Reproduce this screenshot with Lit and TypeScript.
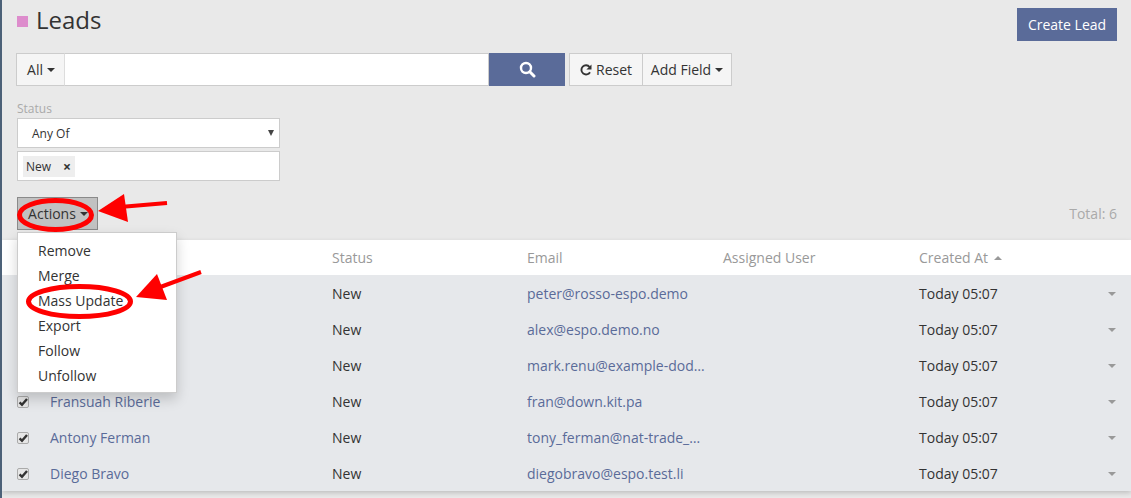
import { LitElement, html, css, svg } from "lit";
import { customElement } from "lit/decorators.js";

const rows = [
  { name: "", email: "peter@rosso-espo.demo" },
  { name: "", email: "alex@espo.demo.no" },
  { name: "", email: "mark.renu@example-dodge-mail.demo" },
  { name: "Fransuah Riberie", email: "fran@down.kit.pa" },
  { name: "Antony Ferman", email: "tony_ferman@nat-trade_group.demo" },
  { name: "Diego Bravo", email: "diegobravo@espo.test.li" },
];
const menu = ["Remove", "Merge", "Mass Update", "Export", "Follow", "Unfollow"];

const check = html`<span class="check"><svg viewBox="0 0 12 12" width="12" height="12"><path d="M2.6 6.4 L5 8.8 L10 3" fill="none" stroke="#333" stroke-width="2.4"/></svg></span>`;

@customElement("app-root")
export class AppRoot extends LitElement {
  static styles = css`
    :host { display: block; position: relative; width: 1131px; height: 498px; overflow: hidden; background: #e9e9e9; font: 14px/20px "Open Sans", sans-serif; color: #333; box-sizing: border-box; border-left: 2px solid #4c6178; }
    * { box-sizing: border-box; }
    .head { display: flex; justify-content: space-between; height: 53px; padding: 8px 14px 0 15px; }
    .title { display: flex; align-items: flex-start; font-size: 24px; line-height: 28px; gap: 8px; margin-top: -2px; }
    .sq { width: 11px; height: 11px; background: #dd8ccc; margin-top: 10px; }
    .btn-primary { width: 100px; height: 33px; background: #5a6b99; color: #fff; display: flex; align-items: center; justify-content: center; }
    .search { display: flex; height: 33px; padding-left: 14px; }
    .btn { background: #f5f5f5; border: 1px solid #ccc; display: flex; align-items: center; justify-content: center; gap: 4px; }
    .all { width: 49px; border-right: 1px solid #ddd; padding-left: 1px; }
    .q { width: 424px; background: #fff; border: 1px solid #ccc; border-left: 0; }
    .go { width: 76px; background: #5a6b99; display: flex; align-items: center; justify-content: center; }
    .reset { width: 74px; margin-left: 4px; }
    .add { width: 90px; margin-left: -1px; }
    .caret { width: 0; height: 0; border-left: 4px solid transparent; border-right: 4px solid transparent; border-top: 4px solid #333; display: inline-block; }
    .filter { padding: 15px 0 0 15px; width: 278px; }
    .label { font-size: 12px; line-height: 14px; color: #aaa; padding-top: 1px; margin-bottom: -1px; }
    .select, .tags { background: #fff; border: 1px solid #ccc; height: 30px; display: flex; align-items: center; font-size: 12px; }
    .select { margin-top: 3px; justify-content: space-between; padding: 2px 5px 0 14px; }
    .tri { width: 0; height: 0; border-left: 3.5px solid transparent; border-right: 3.5px solid transparent; border-top: 6px solid #444; margin-top: -3px; }
    .tags { margin-top: 3px; padding-left: 5px; }
    .tag { width: 52px; height: 21px; background: #eee; display: flex; justify-content: space-between; align-items: center; padding: 2px 4px 0 3px; font-size: 12px; }
    .tag b { font-size: 14px; line-height: 14px; font-weight: 700; margin-top: -1px; }
    .bar { display: flex; justify-content: space-between; align-items: center; height: 33px; margin-top: 16px; padding: 0 14px 0 15px; }
    .actions { width: 81px; height: 33px; background: #c1c1c1; border: 1px solid #8a8a8a; display: flex; align-items: center; justify-content: center; gap: 4px; padding-left: 1px; }
    .total { color: #aaa; }
    .table { margin-top: 10px; box-shadow: 0 2px 5px rgba(0,0,0,.18); }
    .row { display: grid; grid-template-columns: 33px 282px 195px 196px 196px 1fr; align-items: center; height: 36px; padding: 2px 15px 0; background: #e6e8eb; }
    .row.hd { height: 35px; padding-top: 0; background: #fff; color: #999; }
    .row .em { overflow: hidden; white-space: nowrap; text-overflow: ellipsis; width: 179px; }
    a { color: #5a6b99; text-decoration: none; }
    .date { display: flex; justify-content: space-between; align-items: center; }
    .sm { width: 0; height: 0; border-left: 4px solid transparent; border-right: 4px solid transparent; display: inline-block; }
    .up { border-bottom: 4px solid #999; }
    .dn { border-top: 4px solid #999; }
    .created { display: flex; align-items: center; gap: 6px; }
    .check { width: 12px; height: 12px; display: block; background: #e6e6e6; border: 1px solid #aaa; border-radius: 2px; overflow: hidden; }
    .check svg { display: block; margin: -1px; }
    .menu { position: absolute; left: 15px; top: 232px; width: 160px; height: 161px; background: #fff; border: 1px solid #ccc; box-shadow: 0 6px 12px rgba(0,0,0,.18); padding: 5px 0; }
    .menu div { height: 25px; line-height: 25px; padding-left: 20px; }
    .notes { position: absolute; left: -2px; top: 0; pointer-events: none; }
  `;
  render() {
    return html`
      <div class="head">
        <div class="title"><span class="sq"></span><span>Leads</span></div>
        <div class="btn-primary">Create Lead</div>
      </div>
      <div class="search">
        <div class="btn all">All <span class="caret"></span></div>
        <div class="q"></div>
        <div class="go"><svg width="17" height="17" viewBox="0 0 17 17"><circle cx="7" cy="7" r="5" fill="none" stroke="#fff" stroke-width="2.4"/><path d="M10.8 10.8 L15 15" stroke="#fff" stroke-width="3" stroke-linecap="round"/></svg></div>
        <div class="btn reset"><svg width="12" height="12" viewBox="0 0 12 12"><path d="M10 8.2 A4.6 4.6 0 1 1 9.6 3" fill="none" stroke="#333" stroke-width="1.9"/><path d="M11.5 0.5 V5.6 H6.4 Z" fill="#333"/></svg>Reset</div>
        <div class="btn add">Add Field <span class="caret"></span></div>
      </div>
      <div class="filter">
        <div class="label">Status</div>
        <div class="select"><span>Any Of</span><span class="tri"></span></div>
        <div class="tags"><span class="tag">New <b>×</b></span></div>
      </div>
      <div class="bar">
        <div class="actions">Actions <span class="caret"></span></div>
        <div class="total">Total: 6</div>
      </div>
      <div class="table">
        <div class="row hd"><span>${check}</span><span></span><span>Status</span><span>Email</span><span>Assigned User</span><span class="created">Created At <span class="sm up"></span></span></div>
        ${rows.map(r => html`<div class="row">${check}<a href="#">${r.name}</a><span>New</span><a class="em" href="#">${r.email}</a><span></span><span class="date"><span>Today 05:07</span><span class="sm dn"></span></span></div>`)}
      </div>
      <div class="menu">${menu.map(m => html`<div>${m}</div>`)}</div>
      <svg class="notes" width="1131" height="498" viewBox="0 0 1131 498">
        ${svg`<g fill="none" stroke="#f00" stroke-width="5">
          <ellipse cx="55.5" cy="215" rx="36" ry="14.5"/>
          <ellipse cx="79.5" cy="301.5" rx="51" ry="15"/>
        </g>
        <g fill="none" stroke="#f00" stroke-width="4">
          <path d="M120 207 L167 203"/>
          <path d="M155 289 L201 272"/>
        </g>
        <path d="M98 211 L124 194 L128 222 Z" fill="#f00"/>
        <path d="M136 297 L157 274 L167 300 Z" fill="#f00"/>`}
      </svg>
    `;
  }
}
